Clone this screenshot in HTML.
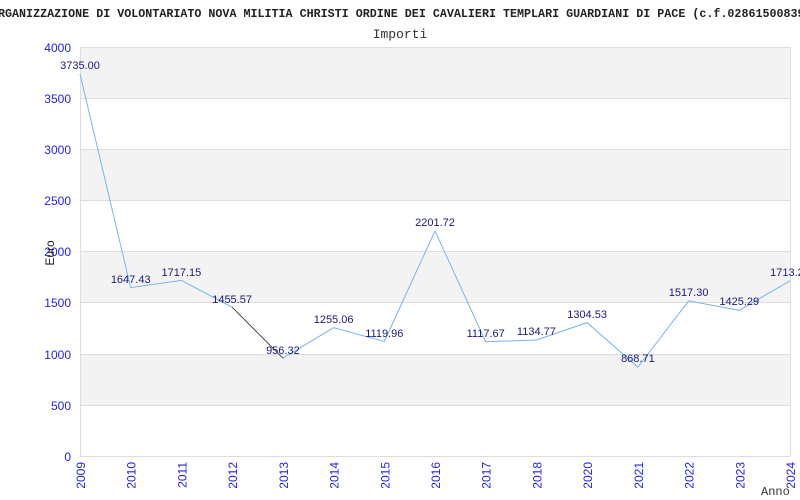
<!DOCTYPE html>
<html><head><meta charset="utf-8"><style>body{margin:0;background:#fff}svg{display:block}</style></head><body>
<svg width="800" height="500" xmlns="http://www.w3.org/2000/svg">
<rect width="800" height="500" fill="#fff"/>
<text x="-2" y="17" font-family="Liberation Mono, monospace" font-weight="bold" font-size="11.7" fill="#222">RGANIZZAZIONE DI VOLONTARIATO NOVA MILITIA CHRISTI ORDINE DEI CAVALIERI TEMPLARI GUARDIANI DI PACE (c.f.02861500839)</text>
<text x="400" y="38" text-anchor="middle" font-family="Liberation Mono, monospace" font-size="13" fill="#333">Importi</text>
<g fill="#f3f3f3">
<rect x="80" y="47" width="710" height="51"/>
<rect x="80" y="149" width="710" height="51"/>
<rect x="80" y="251" width="710" height="51"/>
<rect x="80" y="354" width="710" height="51"/>
</g>
<g stroke="#ddd" stroke-width="1">
<line x1="80" y1="47.5" x2="790" y2="47.5"/><line x1="80" y1="98.5" x2="790" y2="98.5"/>
<line x1="80" y1="149.5" x2="790" y2="149.5"/><line x1="80" y1="200.5" x2="790" y2="200.5"/>
<line x1="80" y1="251.5" x2="790" y2="251.5"/><line x1="80" y1="302.5" x2="790" y2="302.5"/>
<line x1="80" y1="354.5" x2="790" y2="354.5"/><line x1="80" y1="405.5" x2="790" y2="405.5"/>
<line x1="80" y1="456.5" x2="790" y2="456.5"/>
<line x1="80.5" y1="47" x2="80.5" y2="456"/><line x1="790.5" y1="47" x2="790.5" y2="456"/>
</g>
<g font-family="Liberation Sans, sans-serif" font-size="12" fill="#2222ee" text-anchor="end">
<text x="71" y="52">4000</text><text x="71" y="103">3500</text><text x="71" y="154">3000</text>
<text x="71" y="205">2500</text><text x="71" y="256">2000</text><text x="71" y="307">1500</text>
<text x="71" y="359">1000</text><text x="71" y="410">500</text><text x="71" y="461">0</text>
</g>
<text transform="translate(54,253) rotate(-90)" text-anchor="middle" font-family="Liberation Sans, sans-serif" font-size="12" fill="#222">Euro</text>
<g font-family="Liberation Sans, sans-serif" font-size="12" fill="#2222ee" text-anchor="end">
<text transform="translate(85,462) rotate(-90)">2009</text>
<text transform="translate(135.7,462) rotate(-90)">2010</text>
<text transform="translate(186.4,462) rotate(-90)">2011</text>
<text transform="translate(237.1,462) rotate(-90)">2012</text>
<text transform="translate(287.9,462) rotate(-90)">2013</text>
<text transform="translate(338.6,462) rotate(-90)">2014</text>
<text transform="translate(389.3,462) rotate(-90)">2015</text>
<text transform="translate(440,462) rotate(-90)">2016</text>
<text transform="translate(490.7,462) rotate(-90)">2017</text>
<text transform="translate(541.4,462) rotate(-90)">2018</text>
<text transform="translate(592.1,462) rotate(-90)">2020</text>
<text transform="translate(642.9,462) rotate(-90)">2021</text>
<text transform="translate(693.6,462) rotate(-90)">2022</text>
<text transform="translate(744.3,462) rotate(-90)">2023</text>
<text transform="translate(795,462) rotate(-90)">2024</text>
</g>
<text x="761" y="495" font-family="Liberation Mono, monospace" font-size="12" fill="#333">Anno</text>
<polyline fill="none" stroke="#77b4f0" stroke-width="1" points="80,74.1 130.7,287.6 181.4,280.4 232.1,307.2"/>
<polyline fill="none" stroke="#444" stroke-width="1" points="232.1,307.2 282.9,358.2"/>
<polyline fill="none" stroke="#77b4f0" stroke-width="1" points="282.9,358.2 333.6,327.7 384.3,341.5 435,230.9 485.7,341.7 536.4,340 587.1,322.6 637.9,367.2 688.6,300.9 739.3,310.3 790,280.8"/>
<g font-family="Liberation Sans, sans-serif" font-size="11" fill="#1a1a80" text-anchor="middle">
<text x="80" y="69">3735.00</text><text x="130.7" y="283">1647.43</text><text x="181.4" y="276">1717.15</text>
<text x="232.1" y="303">1455.57</text><text x="282.9" y="354">956.32</text><text x="333.6" y="323">1255.06</text>
<text x="384.3" y="337">1119.96</text><text x="435" y="226">2201.72</text><text x="485.7" y="337">1117.67</text>
<text x="536.4" y="335">1134.77</text><text x="587.1" y="318">1304.53</text><text x="637.9" y="362">868.71</text>
<text x="688.6" y="296">1517.30</text><text x="739.3" y="305">1425.29</text><text x="790" y="276">1713.20</text>
</g>
</svg>
</body></html>
